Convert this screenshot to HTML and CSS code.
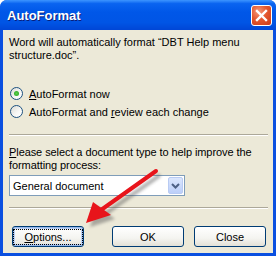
FILE: index.html
```html
<html>
  <head>
    <link rel="stylesheet" href="styles.css">
  </head>
  <body>
    <div class="window">
      <div class="titlebar">
        <span class="title">AutoFormat</span>
        <span class="close-btn">
          <svg width="13" height="13" viewBox="0 0 13 13">
            <path d="M2 2 L11 11 M11 2 L2 11" stroke="#fff" stroke-width="2.4" stroke-linecap="square"/>
          </svg>
        </span>
      </div>

      <div class="content">
        <p class="message">Word will automatically format “DBT Help menu structure.doc”.</p>

        <div class="options">
          <label class="radio-row">
            <span class="radio checked"></span>
            <span><u>A</u>utoFormat now</span>
          </label>
          <label class="radio-row">
            <span class="radio"></span>
            <span>AutoFormat and <u>r</u>eview each change</span>
          </label>
        </div>

        <div class="separator"></div>

        <p class="prompt"><u>P</u>lease select a document type to help improve the formatting process:</p>

        <div class="combo">
          <span class="combo-text">General document</span>
          <span class="combo-btn">
            <svg width="9" height="6" viewBox="0 0 9 6">
              <path d="M1 1 L4.5 4.5 L8 1" stroke="#4d6185" stroke-width="2" fill="none"/>
            </svg>
          </span>
        </div>

        <div class="separator"></div>

        <div class="buttons">
          <button class="btn btn-focus"><span class="focus-ring"><u>O</u>ptions...</span></button>
          <div class="btn-group">
            <button class="btn">OK</button>
            <button class="btn">Close</button>
          </div>
        </div>
      </div>

      <!-- red annotation arrow drawn over the dialog -->
      <svg class="arrow" width="276" height="256" viewBox="0 0 276 256">
        <defs>
          <filter id="shadow" x="-20%" y="-20%" width="140%" height="140%">
            <feGaussianBlur stdDeviation="1.6"/>
          </filter>
        </defs>
        <g transform="translate(4,4)" opacity="0.45" filter="url(#shadow)">
          <line x1="156" y1="171" x2="101" y2="210" stroke="#555" stroke-width="4"/>
          <polygon points="86,223 93,202 111,215" fill="#555"/>
        </g>
        <line x1="156" y1="171" x2="101" y2="210" stroke="#e8141b" stroke-width="4" stroke-linecap="round"/>
        <polygon points="86,223 93,202 111,215" fill="#e8141b"/>
      </svg>
    </div>
  </body>
</html>
```

FILE: styles.css
```css
body {
  margin: 0;
  background-color: #fff;
  font-family: "Liberation Sans", Arial, sans-serif;
  font-size: 11px;
  color: #000;
}
.window {
  position: relative;
  width: 276px;
  height: 256px;
  border-radius: 7px 7px 0 0;
  overflow: hidden;
  background-color: #0a4fe0;
}
.titlebar {
  height: 30px;
  display: flex;
  align-items: center;
  justify-content: space-between;
  padding: 0 4px 0 7px;
  box-sizing: border-box;
  background: linear-gradient(#3d95ff 0, #0a64f0 12%, #0057e8 40%, #0055e5 75%, #0046d6 100%);
}
.title {
  color: #fff;
  font-weight: bold;
  font-size: 13px;
  text-shadow: 1px 1px 0 #0a1d7a;
  margin-top: 1px;
}
.close-btn {
  width: 21px;
  height: 21px;
  box-sizing: border-box;
  border: 1px solid #fff;
  border-radius: 3px;
  display: flex;
  align-items: center;
  justify-content: center;
  background: radial-gradient(circle at 35% 30%, #f59a7c 0, #e4582f 45%, #c9391a 100%);
  margin-top: 1px;
}
.content {
  margin: 0 3px 3px 3px;
  height: 223px;
  box-sizing: border-box;
  background-color: #ece9d8;
  padding: 6px 6px 0 6px;
  display: flex;
  flex-direction: column;
}
.message {
  margin: 0;
  line-height: 13px;
  width: 245px;
}
.options {
  margin-top: 25px;
  display: flex;
  flex-direction: column;
  gap: 5px;
}
.radio-row {
  display: flex;
  align-items: center;
  gap: 6px;
  height: 13px;
  padding-left: 1px;
}
.radio {
  width: 13px;
  height: 13px;
  box-sizing: border-box;
  border: 1px solid #1c5180;
  border-radius: 50%;
  background: linear-gradient(135deg, #dcdcd6 0, #f8f8f6 60%, #fff 100%);
  display: flex;
  align-items: center;
  justify-content: center;
}
.radio.checked::after {
  content: "";
  width: 5px;
  height: 5px;
  border-radius: 50%;
  background: radial-gradient(circle, #5ed04a 0, #21a121 100%);
}
.separator {
  border-top: 1px solid #aca899;
  border-bottom: 1px solid #fff;
  height: 0;
  margin-right: -1px;
}
.options + .separator {
  margin-top: 16px;
}
.prompt {
  margin: 10px 0 0 0;
  line-height: 13px;
  width: 260px;
  letter-spacing: -0.08px;
}
.combo {
  margin-top: 3px;
  width: 176px;
  height: 21px;
  box-sizing: border-box;
  border: 1px solid #7f9db9;
  background-color: #fff;
  display: flex;
  align-items: center;
  justify-content: space-between;
  padding: 1px 1px 1px 3px;
}
.combo-btn {
  width: 15px;
  height: 17px;
  box-sizing: border-box;
  border: 1px solid #b9cbf3;
  border-radius: 2px;
  background: linear-gradient(#dbe6fd, #bccff9);
  display: flex;
  align-items: center;
  justify-content: center;
}
.combo + .separator {
  margin-top: 11px;
}
.buttons {
  margin-top: 17px;
  display: flex;
  justify-content: space-between;
  padding-left: 3px;
  padding-right: 1px;
}
.btn-group {
  display: flex;
  gap: 10px;
}
.btn {
  width: 72px;
  height: 21px;
  padding: 0;
  font-family: "Liberation Sans", Arial, sans-serif;
  font-size: 11px;
  color: #000;
  border: 1px solid #003c74;
  border-radius: 3px;
  background: linear-gradient(#fff 0, #f4f4f0 60%, #e3e1d6 100%);
  display: flex;
  align-items: center;
  justify-content: center;
}
.btn-focus {
  box-shadow: inset 0 0 0 1px #98b8ea, inset 0 0 0 2px #bcd2f5;
}
.focus-ring {
  border: 1px dotted #000;
  padding: 1px 10px;
  line-height: 12px;
}
.arrow {
  position: absolute;
  left: 0;
  top: 0;
  pointer-events: none;
}
```
